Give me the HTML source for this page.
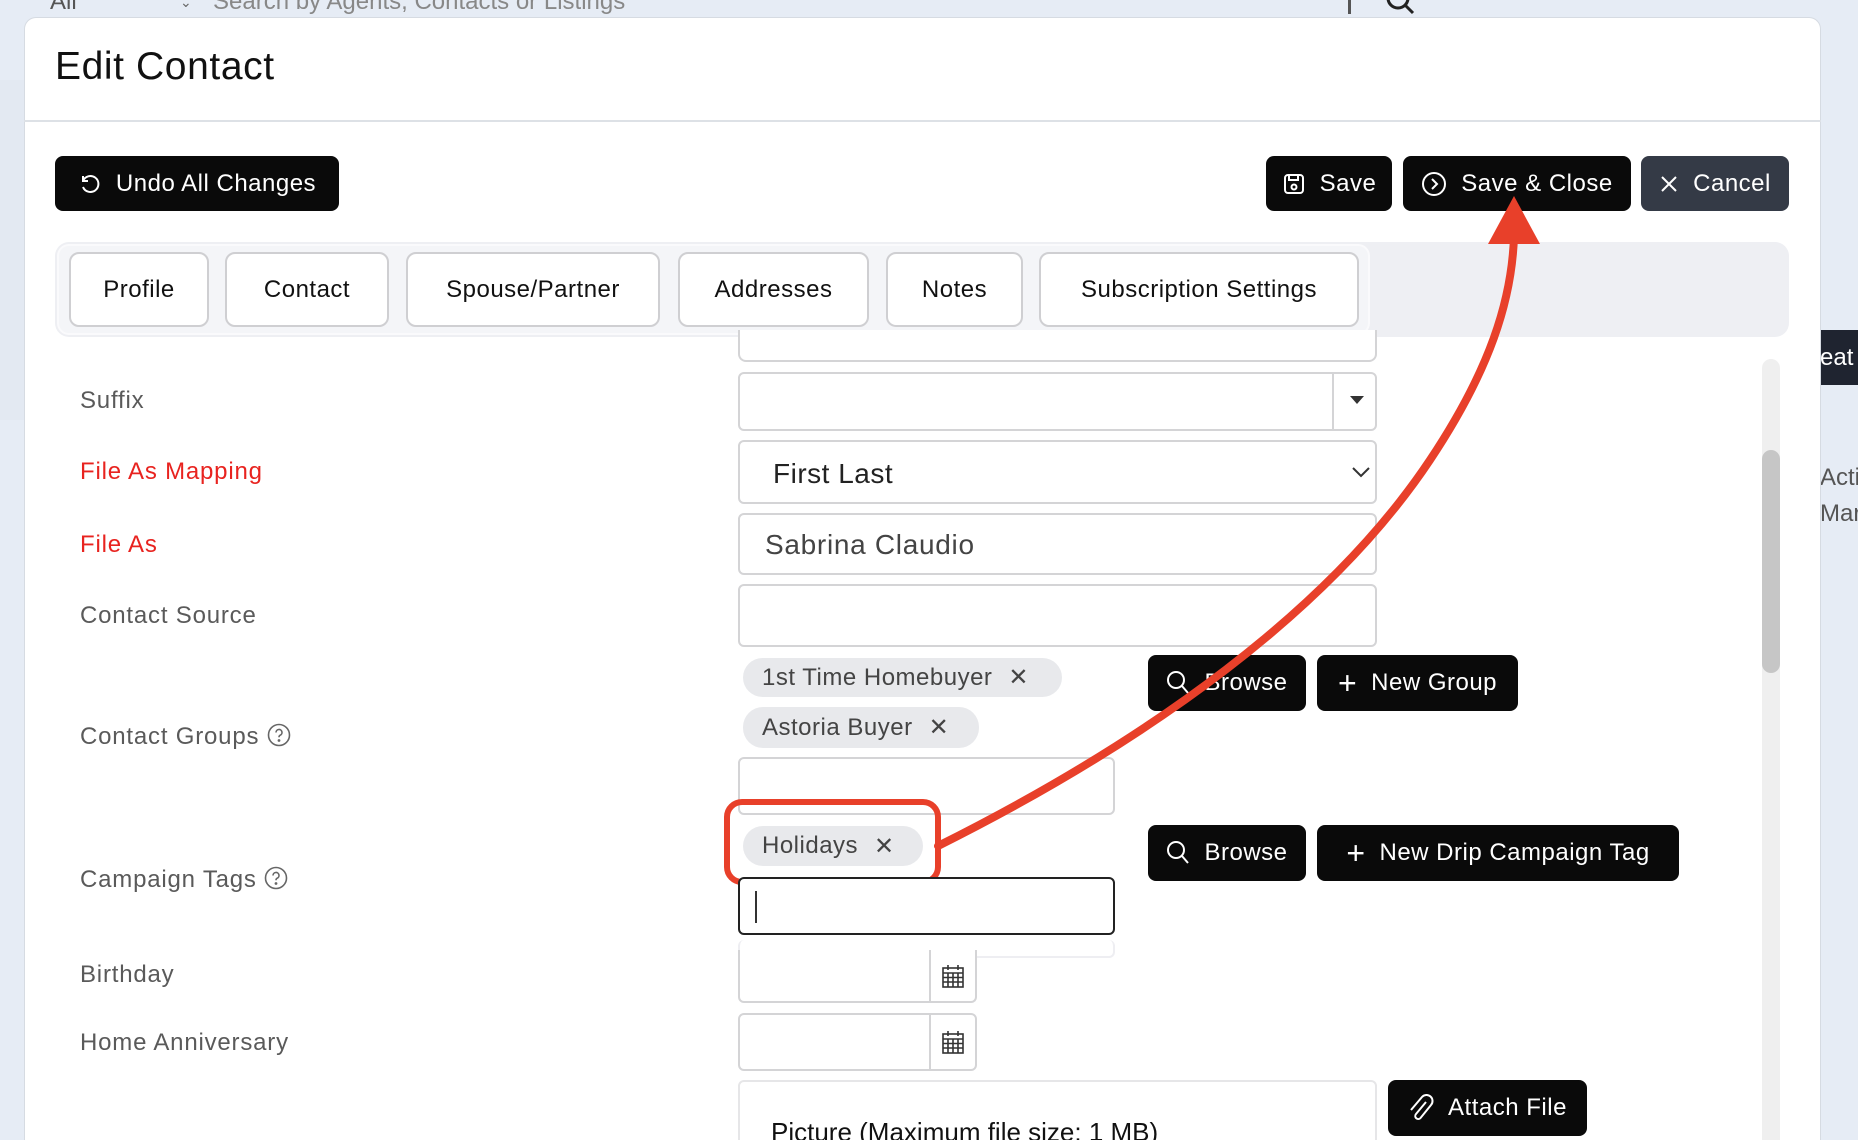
<!DOCTYPE html>
<html style="width:1858px;height:1140px;overflow:hidden"><head><meta charset="utf-8"><style>
*{box-sizing:border-box;margin:0;padding:0}
body{width:1858px;height:1140px;overflow:hidden;background:#e6ecf5;font-family:"Liberation Sans",sans-serif}
#wrap{position:relative;width:1858px;height:1140px;overflow:hidden}
.a{position:absolute}
.modal{left:24px;top:17px;width:1797px;height:1140px;background:#fff;border-radius:12px 12px 0 0;border:1px solid #d6dbe2;border-bottom:none}
.btn{position:absolute;background:#0a0a0a;color:#fff;border-radius:8px;font-size:24px;display:flex;align-items:center;justify-content:center;gap:14px;letter-spacing:.5px}
.tab{position:absolute;top:252px;height:75px;background:#fff;border:2px solid #cfcfd2;border-radius:10px;font-size:24px;display:flex;align-items:center;justify-content:center;color:#111;letter-spacing:.5px}
.lbl{position:absolute;left:80px;font-size:24px;color:#5a5a5a;letter-spacing:.8px;transform:translateY(-50%)}
.red{color:#e8231f}
.inp{position:absolute;background:#fff;border:2px solid #d4d4d6;border-radius:6px}
.chip{position:absolute;background:#e8e9ec;border-radius:20px;font-size:24px;color:#444;display:flex;align-items:center;padding-left:19px;gap:16px;letter-spacing:.5px}
.cal{position:absolute;right:0;top:0;bottom:0;width:46px;border-left:2px solid #d4d4d6;display:flex;align-items:center;justify-content:center}
</style></head><body><div id="wrap">
<div class="a" style="left:50px;top:-12px;font-size:24px;color:#555">All</div>
<div class="a" style="left:180px;top:-6px;font-size:14px;color:#666">⌄</div>
<div class="a" style="left:213px;top:-12px;font-size:24px;color:#888">Search by Agents, Contacts or Listings</div>
<div class="a" style="left:1348px;top:0;width:3px;height:14px;background:#555"></div>
<svg class="a" style="left:1385px;top:-12px" width="30" height="28"><circle cx="13" cy="10" r="10" fill="none" stroke="#222" stroke-width="3"/><line x1="20" y1="17" x2="28" y2="25" stroke="#222" stroke-width="3"/></svg>
<div class="a" style="left:1820px;top:330px;width:40px;height:55px;background:#1f2430;color:#fff;font-size:24px;line-height:55px;overflow:hidden">eat</div>
<div class="a" style="left:1820px;top:460px;font-size:24px;color:#555;overflow:hidden;width:40px;line-height:36px">Acti<br>Mar</div>
<div class="a" style="left:0;top:80px;width:24px;height:340px;background:#e3e9f2"></div>

<div class="a modal"></div>
<div class="a" style="left:55px;top:45px;font-size:39px;color:#111;letter-spacing:.6px">Edit Contact</div>
<div class="a" style="left:24px;top:120px;width:1797px;height:2px;background:#dde1e6"></div>

<div class="btn" style="left:55px;top:156px;width:284px;height:55px"><svg width="24" height="24" viewBox="0 0 24 24" fill="none" stroke="#fff" stroke-width="2"><path d="M5 9a8 8 0 1 1 0 6"/><path d="M5 4v5h5"/></svg>Undo All Changes</div>
<div class="btn" style="left:1266px;top:156px;width:126px;height:55px"><svg width="24" height="24" viewBox="0 0 24 24" fill="none" stroke="#fff" stroke-width="2"><rect x="3" y="3" width="18" height="18" rx="3"/><path d="M7 3v5h9V3"/><circle cx="12" cy="15" r="2.5"/></svg>Save</div>
<div class="btn" style="left:1403px;top:156px;width:228px;height:55px"><svg width="26" height="26" viewBox="0 0 26 26" fill="none" stroke="#fff" stroke-width="2"><circle cx="13" cy="13" r="11"/><path d="M11 8l5 5-5 5"/></svg>Save &amp; Close</div>
<div class="btn" style="left:1641px;top:156px;width:148px;height:55px;background:#343a46"><svg width="20" height="20" viewBox="0 0 20 20" stroke="#fff" stroke-width="2"><path d="M3 3l14 14M17 3L3 17"/></svg>Cancel</div>

<div class="a" style="left:55px;top:242px;width:1734px;height:95px;background:#eeeff3;border-radius:14px"></div>
<div class="a" style="left:57px;top:244px;width:1313px;height:91px;background:#f4f5f8;border-radius:12px;border:2px solid #fafafc"></div>
<div class="tab" style="left:69px;width:140px">Profile</div>
<div class="tab" style="left:225px;width:164px">Contact</div>
<div class="tab" style="left:406px;width:254px">Spouse/Partner</div>
<div class="tab" style="left:678px;width:191px">Addresses</div>
<div class="tab" style="left:886px;width:137px">Notes</div>
<div class="tab" style="left:1039px;width:320px">Subscription Settings</div>

<div class="inp" style="left:738px;top:330px;width:639px;height:32px;border-top:none;border-radius:0 0 8px 8px"></div>
<div class="lbl" style="top:401px">Suffix</div>
<div class="inp" style="left:738px;top:372px;width:639px;height:59px"><div class="a" style="left:592px;top:0;bottom:0;border-left:2px solid #d4d4d6"></div><svg class="a" style="left:610px;top:22px" width="14" height="9"><path d="M0 0h14L7 8z" fill="#333"/></svg></div>
<div class="lbl red" style="top:472px">File As Mapping</div>
<div class="inp" style="left:738px;top:440px;width:639px;height:64px"><div class="a" style="left:33px;top:16px;font-size:28px;color:#222;letter-spacing:.5px">First Last</div><svg class="a" style="left:612px;top:25px" width="18" height="11" fill="none" stroke="#333" stroke-width="2"><path d="M1 1l8 8 8-8"/></svg></div>
<div class="lbl red" style="top:545px">File As</div>
<div class="inp" style="left:738px;top:513px;width:639px;height:62px"><div class="a" style="left:25px;top:14px;font-size:28px;color:#444;letter-spacing:.7px">Sabrina Claudio</div></div>
<div class="lbl" style="top:616px">Contact Source</div>
<div class="inp" style="left:738px;top:584px;width:639px;height:63px"></div>

<div class="lbl" style="top:737px">Contact Groups <svg width="24" height="24" style="vertical-align:-3px" viewBox="0 0 24 24" fill="none" stroke="#666" stroke-width="1.6"><circle cx="12" cy="12" r="10.5"/><path d="M9 9.5a3 3 0 1 1 4 2.8c-.8.4-1 1-1 2"/><circle cx="12" cy="17.5" r=".6" fill="#666"/></svg></div>
<div class="chip" style="left:743px;top:658px;width:319px;height:39px">1st Time Homebuyer <span style="font-size:24px">✕</span></div>
<div class="chip" style="left:743px;top:707px;width:236px;height:41px">Astoria Buyer <span>✕</span></div>
<div class="inp" style="left:738px;top:757px;width:377px;height:58px"></div>
<div class="btn" style="left:1148px;top:655px;width:158px;height:56px"><svg width="24" height="26" viewBox="0 0 24 26" fill="none" stroke="#fff" stroke-width="2"><circle cx="10" cy="10" r="8"/><path d="M16 16l6 7"/></svg>Browse</div>
<div class="btn" style="left:1317px;top:655px;width:201px;height:56px"><span style="font-size:32px;font-weight:300">+</span>New Group</div>

<div class="lbl" style="top:880px">Campaign Tags <svg width="24" height="24" style="vertical-align:-3px" viewBox="0 0 24 24" fill="none" stroke="#666" stroke-width="1.6"><circle cx="12" cy="12" r="10.5"/><path d="M9 9.5a3 3 0 1 1 4 2.8c-.8.4-1 1-1 2"/><circle cx="12" cy="17.5" r=".6" fill="#666"/></svg></div>
<div class="chip" style="left:743px;top:826px;width:180px;height:40px">Holidays <span>✕</span></div>
<div class="a" style="left:724px;top:799px;width:217px;height:86px;border:6px solid #e8402a;border-radius:18px"></div>
<div class="inp" style="left:738px;top:877px;width:377px;height:58px;border:2px solid #222"><div class="a" style="left:15px;top:12px;width:2px;height:32px;background:#333"></div></div>
<div class="inp" style="left:738px;top:940px;width:377px;height:18px;border-color:#eeeef2;border-top:none"></div>
<div class="btn" style="left:1148px;top:825px;width:158px;height:56px"><svg width="24" height="26" viewBox="0 0 24 26" fill="none" stroke="#fff" stroke-width="2"><circle cx="10" cy="10" r="8"/><path d="M16 16l6 7"/></svg>Browse</div>
<div class="btn" style="left:1317px;top:825px;width:362px;height:56px"><span style="font-size:32px;font-weight:300">+</span>New Drip Campaign Tag</div>

<div class="lbl" style="top:975px">Birthday</div>
<div class="inp" style="left:738px;top:950px;width:239px;height:53px;border-top:none;border-radius:0 0 6px 6px"><div class="cal"><svg width="22" height="24" viewBox="0 0 22 24" fill="none" stroke="#333" stroke-width="1.6"><rect x="1" y="4" width="20" height="19"/><path d="M1 9h20M1 13.5h20M1 18h20M6 9v14M11 9v14M16 9v14M6 1v5M16 1v5"/></svg></div></div>
<div class="lbl" style="top:1043px">Home Anniversary</div>
<div class="inp" style="left:738px;top:1013px;width:239px;height:58px"><div class="cal"><svg width="22" height="24" viewBox="0 0 22 24" fill="none" stroke="#333" stroke-width="1.6"><rect x="1" y="4" width="20" height="19"/><path d="M1 9h20M1 13.5h20M1 18h20M6 9v14M11 9v14M16 9v14M6 1v5M16 1v5"/></svg></div></div>

<div class="inp" style="left:738px;top:1080px;width:639px;height:90px;border-color:#e6e6e8"><div class="a" style="left:31px;top:35px;font-size:26px;color:#111;white-space:nowrap">Picture (Maximum file size: 1 MB)</div></div>
<div class="btn" style="left:1388px;top:1080px;width:199px;height:56px"><svg width="26" height="30" viewBox="0 0 26 30" fill="none" stroke="#fff" stroke-width="2"><path d="M18 9L8 21a3 3 0 0 0 4.5 4L23 12a6 6 0 0 0-9-8L3 17"/></svg>Attach File</div>

<div class="a" style="left:1762px;top:359px;width:18px;height:800px;background:#efefef;border-radius:9px"></div>
<div class="a" style="left:1762px;top:450px;width:18px;height:223px;background:#c6c6c6;border-radius:9px"></div>

<svg class="a" style="left:0;top:0" width="1858" height="1140">
<path d="M938 846 C1150 740 1330 610 1430 460 C1490 370 1512 300 1514 236" fill="none" stroke="#e8402a" stroke-width="8" stroke-linecap="round"/>
<path d="M1514 196 L1540 244 L1488 244 Z" fill="#e8402a"/>
</svg>
</div></body></html>
